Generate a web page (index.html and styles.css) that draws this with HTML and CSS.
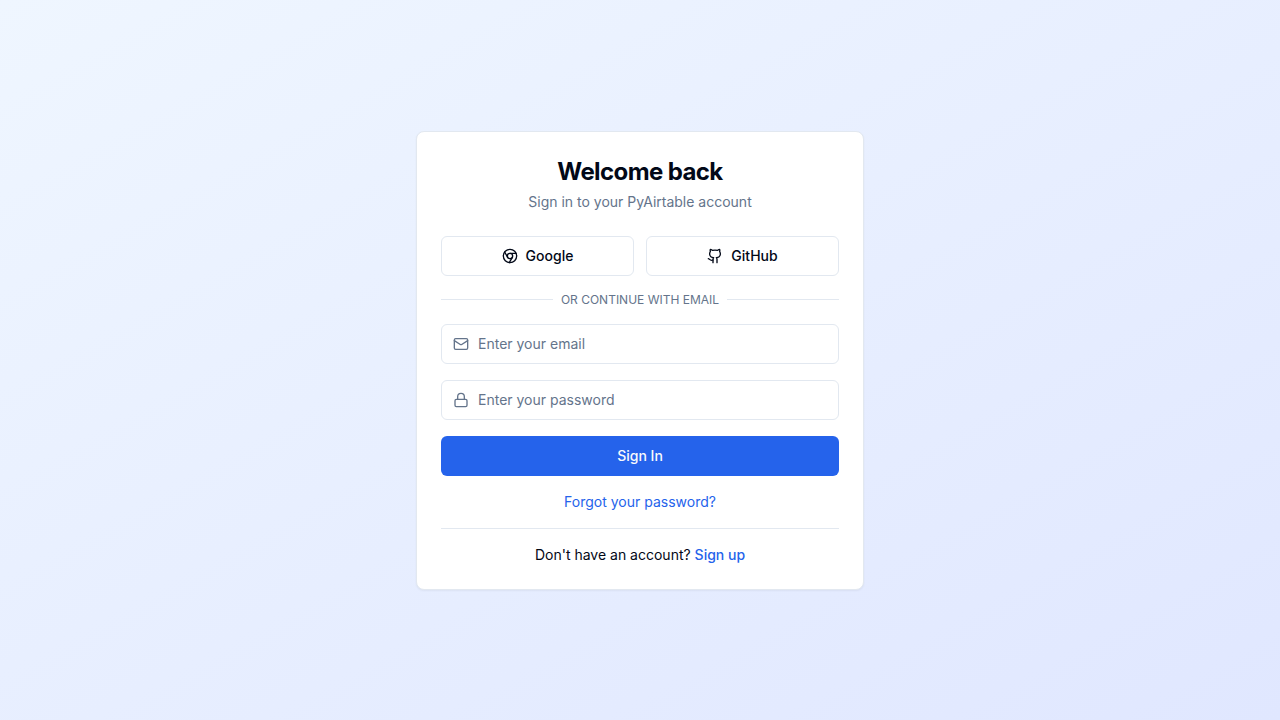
FILE: index.html
```html
<!DOCTYPE html>
<html lang="en">
<head>
<meta charset="utf-8">
<meta name="viewport" content="width=device-width, initial-scale=1">
<title>Sign in - PyAirtable</title>
<link rel="stylesheet" href="styles.css">
</head>
<body>
<main class="page">
  <section class="card">
    <header class="card-header">
      <h1 class="title">Welcome back</h1>
      <p class="subtitle">Sign in to your PyAirtable account</p>
    </header>
    <div class="card-body">
      <div class="providers">
        <button type="button" class="button button-outline">
          <svg class="icon" viewBox="0 0 24 24" aria-hidden="true"><circle cx="12" cy="12" r="10"/><circle cx="12" cy="12" r="4"/><path d="M21.17 8H12M3.95 6.06 8.54 14M10.88 21.94 15.46 14"/></svg>
          Google
        </button>
        <button type="button" class="button button-outline">
          <svg class="icon" viewBox="0 0 24 24" aria-hidden="true"><path d="M15 22v-4a4.8 4.8 0 0 0-1-3.5c3 0 6-2 6-5.5.08-1.25-.27-2.48-1-3.5.28-1.15.28-2.35 0-3.5 0 0-1 0-3 1.5-2.64-.5-5.36-.5-8 0C6 2 5 2 5 2c-.3 1.15-.3 2.35 0 3.5A5.403 5.403 0 0 0 4 9c0 3.5 3 5.5 6 5.5-.39.49-.68 1.05-.85 1.65-.17.6-.22 1.23-.15 1.85v4"/><path d="M9 18c-4.51 2-5-2-7-2"/></svg>
          GitHub
        </button>
      </div>
      <div class="divider"><span>Or continue with email</span></div>
      <form class="form">
        <label class="field">
          <svg class="icon" viewBox="0 0 24 24" aria-hidden="true"><rect width="20" height="16" x="2" y="4" rx="2"/><path d="m22 7-8.97 5.7a1.94 1.94 0 0 1-2.06 0L2 7"/></svg>
          <input class="input" type="email" placeholder="Enter your email" aria-label="Email">
        </label>
        <label class="field">
          <svg class="icon" viewBox="0 0 24 24" aria-hidden="true"><rect width="18" height="11" x="3" y="11" rx="2"/><path d="M7 11V7a5 5 0 0 1 10 0v4"/></svg>
          <input class="input" type="password" placeholder="Enter your password" aria-label="Password">
        </label>
        <button type="submit" class="button button-primary">Sign In</button>
      </form>
      <p class="forgot"><a class="link" href="#">Forgot your password?</a></p>
      <p class="signup">Don't have an account? <a class="link link-strong" href="#">Sign up</a></p>
    </div>
  </section>
</main>
</body>
</html>
```
FILE: styles.css
```css
* {
  box-sizing: border-box;
}

body {
  margin: 0;
  font-family: Inter, "Liberation Sans", sans-serif;
  font-size: 14px;
  line-height: 20px;
  color: #020817;
}

h1,
p {
  margin: 0;
}

.page {
  display: flex;
  align-items: center;
  justify-content: center;
  min-height: 100vh;
  padding: 16px;
  background: linear-gradient(to bottom right, #eff6ff, #e0e7ff);
}

.card {
  width: 100%;
  max-width: 448px;
  padding: 24px;
  background: #fff;
  border: 1px solid #e2e8f0;
  border-radius: 8px;
  box-shadow: 0 1px 2px rgba(0, 0, 0, 0.05);
}

.card-header {
  display: flex;
  flex-direction: column;
  gap: 4px;
  padding-bottom: 24px;
  text-align: center;
}

.title {
  font-size: 24px;
  line-height: 32px;
  font-weight: 700;
  letter-spacing: -0.025em;
}

.subtitle {
  color: #64748b;
}

.card-body,
.form {
  display: flex;
  flex-direction: column;
  gap: 16px;
}

.providers {
  display: grid;
  grid-template-columns: 1fr 1fr;
  gap: 12px;
}

.icon {
  flex: none;
  width: 16px;
  height: 16px;
  fill: none;
  stroke: currentColor;
  stroke-width: 2;
  stroke-linecap: round;
  stroke-linejoin: round;
}

.button {
  display: flex;
  align-items: center;
  justify-content: center;
  gap: 8px;
  height: 40px;
  padding: 0 16px;
  border: 0;
  border-radius: 6px;
  font: inherit;
  font-weight: 500;
  cursor: pointer;
}

.button-outline {
  color: #020817;
  background: #fff;
  border: 1px solid #e2e8f0;
}

.button-primary {
  color: #f8fafc;
  background: #2563eb;
}

.divider {
  display: flex;
  align-items: center;
  gap: 8px;
  font-size: 12px;
  line-height: 16px;
  color: #64748b;
  text-transform: uppercase;
}

.divider::before,
.divider::after {
  content: "";
  flex: 1;
  height: 1px;
  background: #e2e8f0;
}

.field {
  display: flex;
  align-items: center;
  gap: 9px;
  height: 40px;
  padding: 0 11px;
  border: 1px solid #e2e8f0;
  border-radius: 6px;
  color: #64748b;
}

.input {
  flex: 1;
  min-width: 0;
  padding: 0;
  border: 0;
  outline: 0;
  background: transparent;
  font: inherit;
  color: #020817;
}

.input::placeholder {
  color: #64748b;
  opacity: 1;
}

.forgot {
  text-align: center;
}

.signup {
  padding-top: 16px;
  border-top: 1px solid #e2e8f0;
  text-align: center;
}

.link {
  color: #2563eb;
  text-decoration: none;
}

.link-strong {
  font-weight: 500;
}
```
